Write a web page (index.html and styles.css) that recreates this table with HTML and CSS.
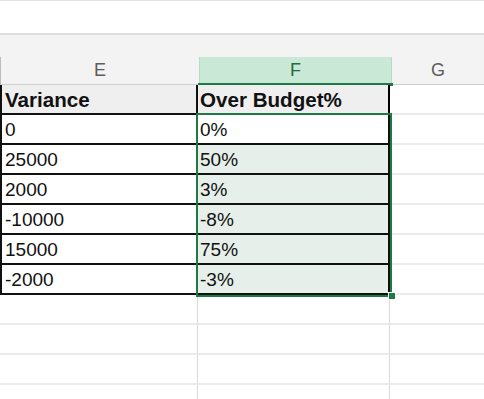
FILE: index.html
```html
<!DOCTYPE html>
<html>
<head>
<meta charset="utf-8">
<link rel="stylesheet" href="styles.css">
</head>
<body>
<div class="toolbar"></div>
<div class="header-area">
  <div class="colheads">
    <div class="colhead">E</div>
    <div class="colhead sel">F</div>
    <div class="colhead">G</div>
  </div>
</div>
<div class="sheet">
  <div class="cell e hdr">Variance</div>
  <div class="cell f hdr">Over Budget%</div>
  <div class="cell g"></div>

  <div class="cell e">0</div>
  <div class="cell f active">0%</div>
  <div class="cell g"></div>

  <div class="cell e">25000</div>
  <div class="cell f tint">50%</div>
  <div class="cell g"></div>

  <div class="cell e">2000</div>
  <div class="cell f tint">3%</div>
  <div class="cell g"></div>

  <div class="cell e">-10000</div>
  <div class="cell f tint">-8%</div>
  <div class="cell g"></div>

  <div class="cell e">15000</div>
  <div class="cell f tint">75%</div>
  <div class="cell g"></div>

  <div class="cell e">-2000</div>
  <div class="cell f tint">-3%</div>
  <div class="cell g"></div>

  <div class="cell blank"></div>
  <div class="cell blank"></div>
  <div class="cell g"></div>

  <div class="cell blank"></div>
  <div class="cell blank"></div>
  <div class="cell g"></div>

  <div class="cell blank"></div>
  <div class="cell blank"></div>
  <div class="cell g"></div>

  <div class="cell blank"></div>
  <div class="cell blank"></div>
  <div class="cell g"></div>

  <div class="selection"></div>
  <div class="handle"></div>
</div>
</body>
</html>
```
FILE: styles.css
```css
html, body {
  margin: 0;
  padding: 0;
  background: #ffffff;
  overflow: hidden;
}
body {
  width: 484px;
  height: 399px;
  font-family: "Liberation Sans", Arial, sans-serif;
  color: #111;
}
.toolbar {
  height: 32px;
  border-top: 1px solid #e3e3e3;
  border-bottom: 2px solid #dedede;
  background: #fff;
}
.header-area {
  background: #f3f3f3;
  padding-top: 22px;
}
.colheads {
  display: grid;
  grid-template-columns: 198px 193px 1fr;
  height: 27px;
  border-bottom: 1px solid #cfcfcf;
  border-left: 1px solid #bdbdbd;
}
.colhead {
  display: flex;
  align-items: center;
  justify-content: center;
  font-size: 18px;
  color: #5c5c5c;
  position: relative;
}
.colhead.sel {
  background: #c9e9d6;
  color: #1e6b3d;
  border-left: 1px solid #b7dcc4;
  border-right: 1px solid #b7dcc4;
}
.colhead.sel::after {
  content: "";
  position: absolute;
  left: -2px;
  right: -2px;
  bottom: -2px;
  height: 3px;
  background: #1d7a45;
}
.sheet {
  position: relative;
  display: grid;
  grid-template-columns: 198px 192px 1fr;
  grid-auto-rows: 30px;
}
.cell {
  box-sizing: border-box;
  display: flex;
  align-items: flex-end;
  padding: 0 0 2px 4px;
  font-size: 19px;
  line-height: 22px;
  white-space: nowrap;
  overflow: hidden;
}
.cell.e {
  border-left: 2px solid #111;
  border-right: 2px solid #111;
  border-bottom: 2px solid #111;
  padding-left: 3px;
}
.cell.f {
  border-right: 2px solid #111;
  border-bottom: 2px solid #111;
  padding-left: 2px;
}
.cell.hdr {
  background: #efefef;
  font-weight: bold;
  font-size: 20.6px;
}
.cell.f.hdr {
  border-right: 2px solid #000;
}
.cell.tint {
  background: #e6efe9;
}
.cell.active {
  background: #fff;
}
.cell.g {
  border-bottom: 2px solid #ebebeb;
}
.cell.blank {
  border-bottom: 2px solid #ebebeb;
  border-right: 1px solid #dadada;
}
.selection {
  position: absolute;
  left: 196px;
  top: 28px;
  width: 196px;
  height: 184px;
  box-sizing: border-box;
  border: 2px solid #1d7a45;
  pointer-events: none;
}
.handle {
  position: absolute;
  left: 388px;
  top: 207px;
  width: 6px;
  height: 6px;
  background: #1d7a45;
  border: 1px solid #fff;
}
```
